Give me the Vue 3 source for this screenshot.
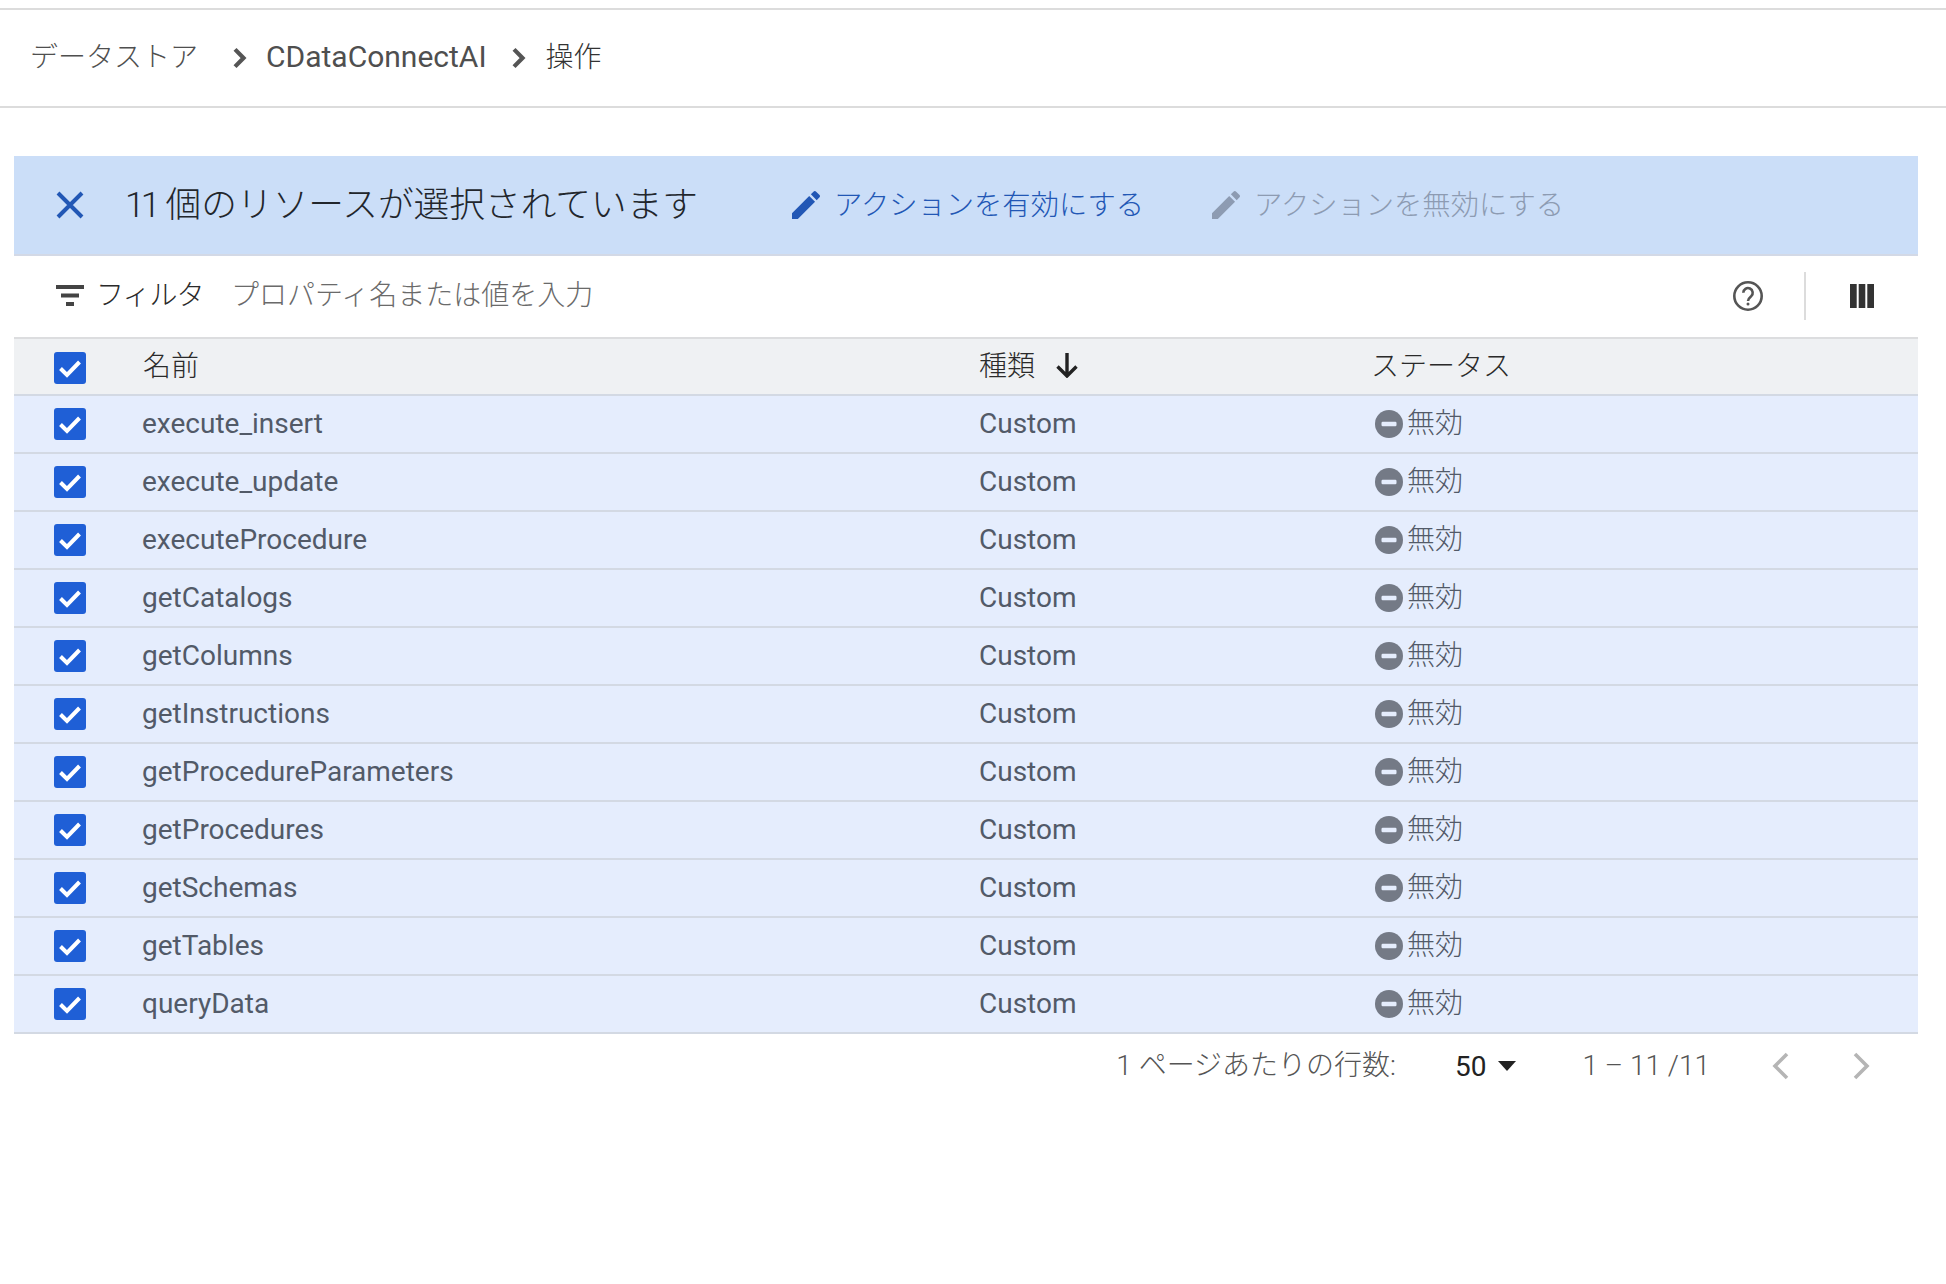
<script setup>
const rows = [
  'execute_insert',
  'execute_update',
  'executeProcedure',
  'getCatalogs',
  'getColumns',
  'getInstructions',
  'getProcedureParameters',
  'getProcedures',
  'getSchemas',
  'getTables',
  'queryData',
]
</script>

<template>
  <div class="page">
    <nav class="crumbs">
      <span class="crumb first">データストア</span>
      <svg class="chev" viewBox="0 0 24 24"><path d="M8.6 4.6 15.9 12l-7.3 7.4" /></svg>
      <span class="crumb link">CDataConnectAI</span>
      <svg class="chev second" viewBox="0 0 24 24"><path d="M8.6 4.6 15.9 12l-7.3 7.4" /></svg>
      <span class="crumb current">操作</span>
    </nav>

    <section class="panel">
      <div class="banner">
        <svg class="close" viewBox="0 0 30 30"><path d="M3 3l24 24M27 3 3 27" /></svg>
        <span class="count"><span class="num">11</span>個のリソースが選択されています</span>
        <button class="action">
          <svg viewBox="3 3 18 18"><path d="M3 17.25V21h3.750L17.810 9.940l-3.750-3.750L3 17.250zM20.710 7.040c.390-.390.390-1.020 0-1.410l-2.340-2.340c-.390-.390-1.020-.390-1.410 0l-1.830 1.830 3.750 3.750 1.830-1.830z" /></svg>
          <span>アクションを有効にする</span>
        </button>
        <button class="action disabled">
          <svg viewBox="3 3 18 18"><path d="M3 17.25V21h3.750L17.810 9.940l-3.750-3.750L3 17.250zM20.710 7.040c.390-.390.390-1.020 0-1.410l-2.340-2.340c-.390-.390-1.020-.390-1.410 0l-1.830 1.830 3.750 3.750 1.830-1.830z" /></svg>
          <span>アクションを無効にする</span>
        </button>
      </div>

      <div class="filter">
        <svg class="filter-icon" viewBox="0 0 28 21"><path d="M0 0h28v4H0zM5 8.500h18v4H5zM10 17h8v4h-8z" /></svg>
        <span class="filter-label">フィルタ</span>
        <span class="filter-input">プロパティ名または値を入力</span>
        <svg class="help" viewBox="0 0 30 30">
          <circle cx="15" cy="15" r="13.700" />
          <path d="M10.300 11.800a4.700 4.700 0 1 1 7.800 3.500c-1.700 1.400-3.100 2.300-3.100 4.700" />
          <circle class="dot" cx="15" cy="23" r="1.500" />
        </svg>
        <span class="divider"></span>
        <svg class="cols" viewBox="0 0 24 24"><path d="M0 0h6.700v24H0zM8.700 0h6.600v24H8.700zM17.300 0H24v24h-6.700z" /></svg>
      </div>

      <div class="row head">
        <span class="check">
          <svg viewBox="0 0 32 32"><path d="M6.500 16.500l6.500 6.500 12.500-13" /></svg>
        </span>
        <span class="cjk name-head">名前</span>
        <span class="sort">
          <span class="cjk">種類</span>
          <svg viewBox="0 0 24 26"><path d="M12 1v23M2.500 14.500 12 24l9.500-9.500" /></svg>
        </span>
        <span class="cjk state-head">ステータス</span>
      </div>

      <div v-for="name in rows" :key="name" class="row item">
        <span class="check">
          <svg viewBox="0 0 32 32"><path d="M6.500 16.500l6.500 6.500 12.500-13" /></svg>
        </span>
        <span class="cell">{{ name }}</span>
        <span class="cell">Custom</span>
        <span class="status">
          <svg viewBox="0 0 28 28">
            <circle cx="14" cy="14" r="14" />
            <rect x="6.500" y="11.800" width="15" height="4.400" rx="1.200" />
          </svg>
          <span class="cjk">無効</span>
        </span>
      </div>

      <div class="pager">
        <span class="per-page">1 ページあたりの行数:</span>
        <span class="size">50</span>
        <span class="caret"></span>
        <span class="range">1 – 11 /11</span>
        <svg class="page-btn prev" viewBox="0 0 20 30"><path d="M16 3 4 15l12 12" /></svg>
        <svg class="page-btn" viewBox="0 0 20 30"><path d="M4 3l12 12L4 27" /></svg>
      </div>
    </section>
  </div>
</template>

<style>
html,
body {
  margin: 0;
  background: #fff;
}
</style>

<style scoped>
.page {
  width: 1946px;
  height: 1284px;
  overflow: hidden;
  background: #fff;
  padding-top: 8px;
  box-sizing: border-box;
  font-family: Roboto, "Noto Sans CJK JP", sans-serif;
  color: #4d5562;
}

.crumbs {
  height: 100px;
  box-sizing: border-box;
  border-top: 2px solid #dcdcdc;
  border-bottom: 2px solid #dcdcdc;
  display: flex;
  align-items: center;
  padding: 0 0 6px 30px;
  font-size: 28px;
  font-weight: 300;
  color: #4f4f4f;
}

.crumb {
  white-space: nowrap;
}

.crumb.first {
  width: 195px;
}

.crumb.link {
  font-size: 30px;
  font-weight: 400;
  margin-left: 13px;
  padding-top: 2px;
}

.crumb.current {
  color: #333;
  margin-left: 14px;
}

.chev {
  width: 28px;
  height: 28px;
  margin-top: 5px;
  flex: none;
}

.chev.second {
  margin-left: 17px;
}

.chev path {
  fill: none;
  stroke: #555;
  stroke-width: 3.600;
}

.panel {
  margin: 48px 0 0 14px;
  width: 1904px;
}

.banner {
  height: 100px;
  box-sizing: border-box;
  background: #cbdef8;
  border-bottom: 2px solid #d3d9e6;
  display: flex;
  align-items: center;
  padding-left: 41px;
}

.close {
  width: 30px;
  height: 30px;
  flex: none;
}

.close path {
  fill: none;
  stroke: #2257b5;
  stroke-width: 4;
}

.count {
  margin-left: 40px;
  padding-bottom: 7px;
  width: 665px;
  font-size: 35.700px;
  font-weight: 300;
  color: #22262c;
  white-space: nowrap;
}

.num {
  letter-spacing: -4px;
  margin-right: 9px;
}

.action {
  display: flex;
  align-items: center;
  gap: 14px;
  width: 420px;
  padding: 0;
  border: none;
  background: none;
  font: inherit;
  font-size: 28.300px;
  font-weight: 300;
  color: #2257b5;
  white-space: nowrap;
}

.action span {
  padding-bottom: 6px;
}

.action svg {
  width: 28px;
  height: 28px;
  margin-left: 2px;
  fill: #2257b5;
  flex: none;
}

.action.disabled {
  color: #8d9bb2;
}

.action.disabled svg {
  fill: #8d9bb2;
}

.filter {
  height: 81px;
  box-sizing: border-box;
  display: flex;
  align-items: center;
  padding: 0 0 2px 42px;
  font-size: 28px;
  font-weight: 300;
}

.filter-icon {
  width: 28px;
  height: 21px;
  fill: #444;
  flex: none;
}

.filter-label {
  margin-left: 12px;
  width: 135px;
  letter-spacing: -1px;
  padding-bottom: 5px;
  color: #2a2a2a;
}

.filter-input {
  color: #6a6a6a;
  flex: 1;
  padding-bottom: 5px;
}

.help {
  width: 30px;
  height: 30px;
  flex: none;
}

.help circle,
.help path {
  fill: none;
  stroke: #555;
  stroke-width: 2.600;
}

.help .dot {
  fill: #555;
  stroke: none;
}

.divider {
  width: 2px;
  height: 48px;
  background: #dcdcdc;
  margin: 0 44px 0 41px;
}

.cols {
  width: 24px;
  height: 24px;
  fill: #333;
  margin-right: 44px;
  flex: none;
}

.row {
  display: grid;
  grid-template-columns: 128px 837px 393px 1fr;
  align-items: center;
  height: 58px;
  box-sizing: border-box;
  border-bottom: 2px solid #d3d9e3;
  font-size: 28px;
}

.cell {
  padding-bottom: 2px;
}

.cjk {
  padding-bottom: 6px;
}

.head {
  background: #eff1f3;
  border-top: 2px solid #dcdddf;
  height: 59px;
  color: #2a2a2a;
  font-weight: 300;
}

.head .check {
  margin-top: 3px;
}

.name-head {
  margin-left: 1px;
}

.state-head {
  margin-left: -1px;
}

.item {
  background: #e5edfd;
  color: #525a68;
}

.check {
  width: 32px;
  height: 32px;
  margin-left: 40px;
  border-radius: 3px;
  background: #1f5fd6;
  display: block;
}

.check svg {
  display: block;
  width: 32px;
  height: 32px;
  fill: none;
  stroke: #fff;
  stroke-width: 4;
}

.sort {
  display: flex;
  align-items: center;
  gap: 20px;
}

.sort svg {
  width: 24px;
  height: 26px;
  margin-bottom: 4px;
  fill: none;
  stroke: #222;
  stroke-width: 3.400;
}

.status {
  display: flex;
  align-items: center;
  gap: 4px;
  padding-left: 3px;
  font-weight: 300;
}

.status svg {
  width: 28px;
  height: 28px;
  fill: #747a86;
  flex: none;
}

.status rect {
  fill: #e5edfd;
}

.pager {
  display: flex;
  align-items: center;
  justify-content: flex-end;
  height: 66px;
  box-sizing: border-box;
  padding: 0 47px 2px 0;
  font-size: 28px;
  font-weight: 300;
  color: #555;
}

.per-page {
  white-space: nowrap;
  padding-bottom: 6px;
}

.size {
  margin-left: 59px;
  font-weight: 400;
  color: #222;
}

.caret {
  margin-left: 11px;
  border-left: 9.500px solid transparent;
  border-right: 9.500px solid transparent;
  border-top: 10px solid #222;
}

.range {
  margin-left: 67px;
  padding-bottom: 2px;
  white-space: nowrap;
}

.page-btn {
  width: 20px;
  height: 30px;
  margin-left: 60px;
  fill: none;
  stroke: #b5b5b5;
  stroke-width: 3.600;
  flex: none;
}

.page-btn.prev {
  margin-left: 61px;
}
</style>
